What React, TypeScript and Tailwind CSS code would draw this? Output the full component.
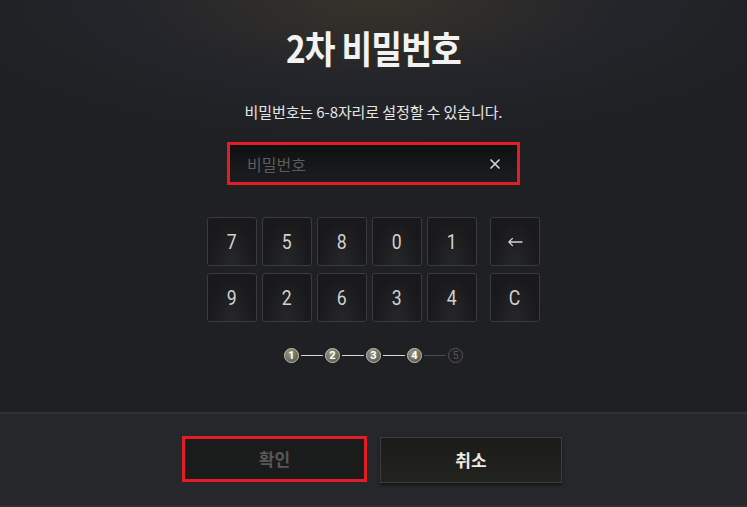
import { X } from 'lucide-react';
import type { ReactNode } from 'react';

const ko = { fontFamily: '"Noto Sans CJK KR", "Noto Sans", sans-serif' };
const num = { fontFamily: 'Roboto, "Noto Sans", sans-serif' };

const Key = ({ label }: { label: ReactNode }) => {
    return (
        <button
            className="w-[50px] h-[49px] rounded-[3px] border border-[#393b3e] bg-[radial-gradient(ellipse_at_50%_100%,#26272a_0%,#19191b_70%)] text-[#d2d2d0] text-[20px] flex items-center justify-center"
            style={num}
        >
            <span className="scale-x-[0.88] inline-block">{label}</span>
        </button>
    );
};

const Step = ({ n, done }: { n: number; done: boolean }) => {
    return done ? (
        <div
            className="w-[15px] h-[15px] rounded-full border border-[#c9c8b8] bg-[radial-gradient(circle_at_40%_35%,#9a9a88_0%,#6b6b5c_60%,#3c3c34_100%)] text-white text-[11px] font-bold flex items-center justify-center leading-none"
            style={num}
        >
            {n}
        </div>
    ) : (
        <div
            className="w-[15px] h-[15px] rounded-full border border-[#55565a] text-[#55565a] text-[11px] flex items-center justify-center leading-none"
            style={num}
        >
            {n}
        </div>
    );
};

const BackArrow = () => (
    <svg width="18" height="10" viewBox="0 0 18 10" className="block">
        <path d="M2 5H17M2 5L6 1.5M2 5L6 8.5" stroke="#d2d2d0" strokeWidth="1.4" fill="none" strokeLinecap="round" />
    </svg>
);

const App = () => {
    const row1 = ['7', '5', '8', '0', '1'];
    const row2 = ['9', '2', '6', '3', '4'];

    return (
        <div className="w-[747px] h-[507px] flex flex-col bg-[#1e2023] overflow-hidden" style={ko}>
            <div className="h-[414px] flex flex-col items-center bg-[radial-gradient(ellipse_60%_35%_at_50%_0%,#36332a_0%,#24252a_55%,#1e2023_100%)] border-b-2 border-[#2f3136]">
                <h1 className="mt-[25px] text-[38px] font-bold text-[#f2f2f2] tracking-[-1px] leading-[44px] scale-x-[0.88]">
                    2차 비밀번호
                </h1>

                <p className="mt-[33px] text-[15px] text-[#e6e6e6] leading-[20px] tracking-[-0.1px]">
                    비밀번호는 6-8자리로 설정할 수 있습니다.
                </p>

                <div className="mt-[20px] w-[293px] h-[43px] border-[3px] border-[#e31d25] bg-[linear-gradient(to_bottom,#0f1011,#1c1d20)] flex items-center justify-between pl-[17px] pr-[14px]">
                    <span className="text-[16px] text-[#5b5c5e]">비밀번호</span>
                    <X className="w-[16px] h-[16px] text-[#d8d8d8]" strokeWidth={2.5} />
                </div>

                <div className="mt-[32px] flex gap-[13px]">
                    <div className="flex flex-col gap-[7px]">
                        <div className="flex gap-[5px]">
                            {row1.map((k) => (
                                <Key key={k} label={k} />
                            ))}
                        </div>
                        <div className="flex gap-[5px]">
                            {row2.map((k) => (
                                <Key key={k} label={k} />
                            ))}
                        </div>
                    </div>
                    <div className="flex flex-col gap-[7px]">
                        <Key label={<BackArrow />} />
                        <Key label="C" />
                    </div>
                </div>

                <div className="mt-[26px] flex items-center">
                    {[1, 2, 3, 4, 5].map((n) => (
                        <div key={n} className="flex items-center">
                            {n > 1 && (
                                <div className={`w-[22px] h-px mx-[2px] ${n === 5 ? 'bg-[#4a4b4e]' : 'bg-[#d8d8d0]'}`}></div>
                            )}
                            <Step n={n} done={n < 5} />
                        </div>
                    ))}
                </div>
            </div>

            <div className="flex-1 bg-[#26272b] flex justify-center pt-[22px] pr-[3px] gap-[13px] border-b-2 border-[#2e2f33]">
                <button className="w-[185px] h-[46px] border-[3px] border-[#e31d25] bg-[#1a1b1b] text-[#595959] text-[17px] font-bold flex items-center justify-center">
                    확인
                </button>
                <button className="w-[182px] h-[46px] mt-px border border-[#3e3e3a] bg-[linear-gradient(to_bottom,#1b1b1a,#22221f)] shadow-[0_2px_3px_rgba(0,0,0,0.5)] text-[#ecebe4] text-[17px] font-bold flex items-center justify-center">
                    취소
                </button>
            </div>
        </div>
    );
};

export default App;
